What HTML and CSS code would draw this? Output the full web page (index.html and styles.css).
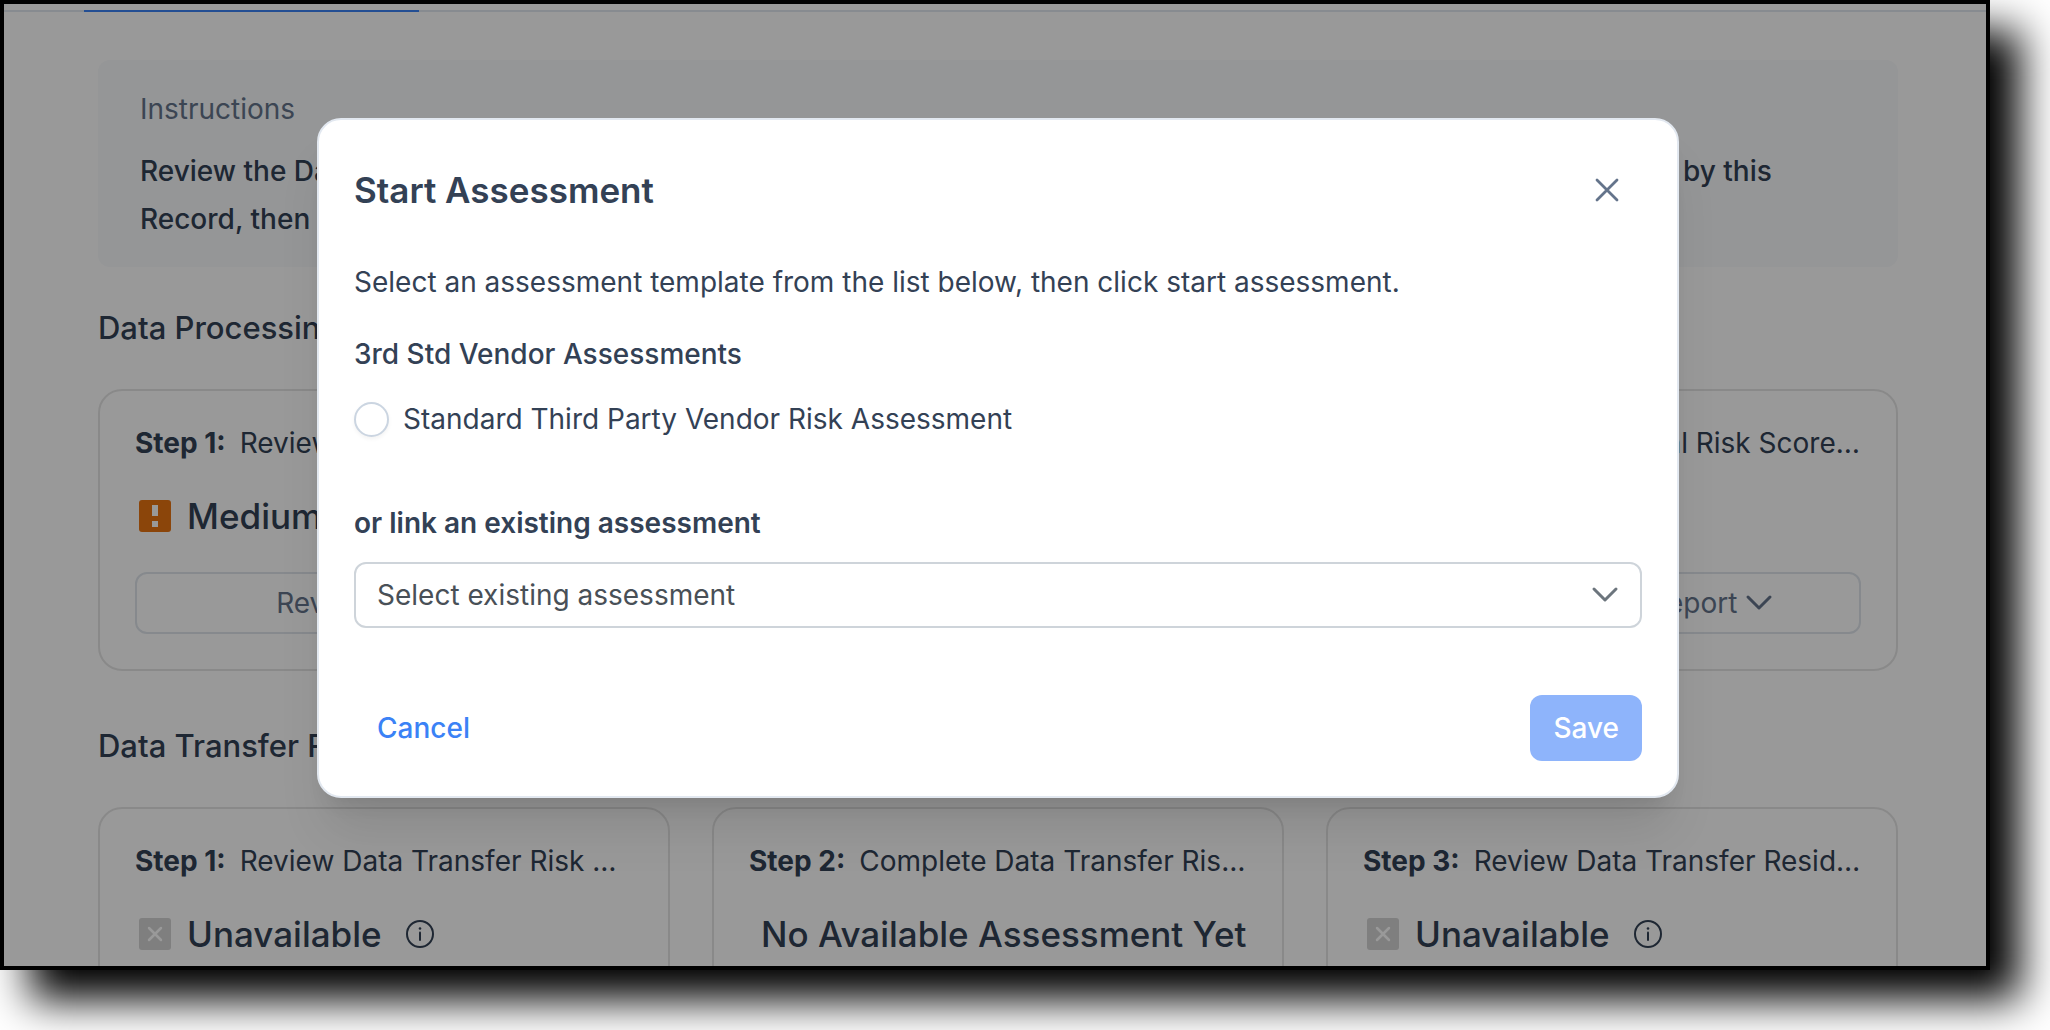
FILE: index.html
```html
<!DOCTYPE html>
<html lang="en">
<head>
  <meta charset="utf-8">
  <meta name="viewport" content="width=device-width, initial-scale=1">
  <title>Start Assessment</title>
  <link rel="stylesheet" href="styles.css">
</head>
<body>
  <svg class="sprite" aria-hidden="true">
    <symbol id="icon-warning" viewBox="0 0 32 32">
      <rect width="32" height="32" rx="3" fill="#e87312"/>
      <path d="M13 5h6v11h-6zM13 21h6v6h-6z" fill="#fff"/>
    </symbol>
    <symbol id="icon-unavailable" viewBox="0 0 32 32">
      <rect width="32" height="32" rx="3" fill="#d4d4d4"/>
      <path d="M10 10l12 12M22 10l-12 12" fill="none" stroke="#fff" stroke-width="2.500" stroke-linecap="round"/>
    </symbol>
    <symbol id="icon-info" viewBox="0 0 28 28">
      <circle cx="14" cy="14" r="13" fill="none" stroke="currentColor" stroke-width="2"/>
      <path d="M14 12.500v7.500" fill="none" stroke="currentColor" stroke-width="2" stroke-linecap="round"/>
      <circle cx="14" cy="8.500" r="1.300" fill="currentColor"/>
    </symbol>
    <symbol id="icon-chevron" viewBox="0 0 28 28">
      <path d="M3 8l11 11 11-11" fill="none" stroke="currentColor" stroke-width="3" stroke-linecap="round" stroke-linejoin="round"/>
    </symbol>
    <symbol id="icon-close" viewBox="0 0 28 28">
      <path d="M4 4l20 20M24 4L4 24" fill="none" stroke="currentColor" stroke-width="2.800" stroke-linecap="round"/>
    </symbol>
  </svg>

  <div class="window">
    <div class="page">
      <nav class="tabs"><a class="tab" href="#risk" aria-label="Risk"></a></nav>
      <main class="content">
        <section class="instructions">
          <p class="instructions-label">Instructions</p>
          <p class="instructions-text">Review the Data Processing Risk and the Data Transfer Risk for the Systems, Vendors, and Company Entities linked by this Record, then complete each of the steps below.</p>
        </section>

        <section class="group">
          <h2 class="group-title">Data Processing Risk</h2>
          <div class="cards">
            <article class="card">
              <h3 class="step"><b class="step-number">Step 1:</b><span class="step-name">Review Data Processing Risk Score</span></h3>
              <div class="status">
                <svg class="status-icon"><use href="#icon-warning"/></svg>
                <span>Medium</span>
              </div>
              <button class="card-button" type="button">Review Score <svg class="chevron"><use href="#icon-chevron"/></svg></button>
            </article>
            <article class="card">
              <h3 class="step"><b class="step-number">Step 2:</b><span class="step-name">Complete Risk Assessment</span></h3>
              <div class="status status-plain">No Available Assessment Yet</div>
              <button class="card-button" type="button">Start Assessment</button>
            </article>
            <article class="card">
              <h3 class="step"><b class="step-number">Step 3:</b><span class="step-name">Review Residual Risk Score Report</span></h3>
              <div class="status">
                <svg class="status-icon"><use href="#icon-warning"/></svg>
                <span>Medium</span>
              </div>
              <button class="card-button" type="button">Open Residual Report <svg class="chevron"><use href="#icon-chevron"/></svg></button>
            </article>
          </div>
        </section>

        <section class="group">
          <h2 class="group-title">Data Transfer Risk</h2>
          <div class="cards">
            <article class="card">
              <h3 class="step"><b class="step-number">Step 1:</b><span class="step-name">Review Data Transfer Risk Score</span></h3>
              <div class="status">
                <svg class="status-icon"><use href="#icon-unavailable"/></svg>
                <span>Unavailable</span>
                <svg class="info-icon"><use href="#icon-info"/></svg>
              </div>
            </article>
            <article class="card">
              <h3 class="step"><b class="step-number">Step 2:</b><span class="step-name">Complete Data Transfer Risk Assessment</span></h3>
              <div class="status status-plain">No Available Assessment Yet</div>
            </article>
            <article class="card">
              <h3 class="step"><b class="step-number">Step 3:</b><span class="step-name">Review Data Transfer Residual Risk</span></h3>
              <div class="status">
                <svg class="status-icon"><use href="#icon-unavailable"/></svg>
                <span>Unavailable</span>
                <svg class="info-icon"><use href="#icon-info"/></svg>
              </div>
            </article>
          </div>
        </section>
      </main>
    </div>

    <div class="overlay">
      <form class="modal" role="dialog" aria-labelledby="modal-title">
        <header class="modal-header">
          <h1 class="modal-title" id="modal-title">Start Assessment</h1>
          <button class="close" type="button" aria-label="Close"><svg class="close-icon"><use href="#icon-close"/></svg></button>
        </header>
        <p class="modal-text">Select an assessment template from the list below, then click start assessment.</p>
        <h2 class="modal-subtitle">3rd Std Vendor Assessments</h2>
        <label class="option"><input class="radio" type="radio" name="template">Standard Third Party Vendor Risk Assessment</label>
        <label class="field-label" for="existing">or link an existing assessment</label>
        <div class="select-wrap">
          <select class="select" id="existing"><option>Select existing assessment</option></select>
          <svg class="chevron select-chevron"><use href="#icon-chevron"/></svg>
        </div>
        <footer class="modal-footer">
          <button class="button button-text" type="button">Cancel</button>
          <button class="button button-primary" type="submit" disabled>Save</button>
        </footer>
      </form>
    </div>
  </div>
</body>
</html>
```
FILE: styles.css
```css
* {
  box-sizing: border-box;
}

body {
  margin: 0;
  padding: 0 60px 60px 0;
  height: 100vh;
  background: #fff;
  color: #334155;
  font: 400 28px/40px Inter, "Liberation Sans", sans-serif;
  overflow: hidden;
}

h1, h2, h3, p {
  margin: 0;
  font-size: inherit;
  font-weight: inherit;
}

button, select {
  font: inherit;
}

.sprite {
  position: absolute;
  width: 0;
  height: 0;
}

.window {
  position: relative;
  height: 100%;
  border: 4px solid #000;
  background: #fff;
  box-shadow: 30px 30px 40px #000;
}

.page {
  height: 100%;
  overflow: hidden;
}

.tabs {
  display: flex;
  padding: 6px 80px 0;
  border-bottom: 2px solid #e2e8f0;
}

.tab {
  width: 335px;
  height: 2px;
  margin-bottom: -2px;
  background: #3b82f6;
}

.content {
  padding: 48px 88px 0 94px;
}

.instructions {
  display: grid;
  gap: 14px;
  padding: 25px 42px 24px;
  border-radius: 12px;
  background: #f8fafc;
  line-height: 48px;
}

.instructions-label {
  color: #64748b;
}

.instructions-text {
  font-weight: 500;
}

.group {
  margin-top: 37px;
}

.group + .group {
  margin-top: 51px;
}

.group-title {
  margin-bottom: 37px;
  font-size: 31px;
  font-weight: 500;
  line-height: 48px;
}

.cards {
  display: grid;
  grid-template-columns: repeat(3, minmax(0, 1fr));
  gap: 42px;
}

.card {
  display: flex;
  flex-direction: column;
  padding: 32px 35px 35px;
  border: 2px solid #e5e5e5;
  border-radius: 24px;
}

.step {
  display: flex;
  gap: 14px;
  margin-bottom: 29px;
}

.step-number {
  flex: none;
  font-weight: 700;
}

.step-name {
  overflow: hidden;
  text-overflow: ellipsis;
  white-space: nowrap;
}

.status {
  display: flex;
  align-items: center;
  gap: 16px;
  margin-bottom: 32px;
  padding-left: 4px;
  font-size: 35px;
  font-weight: 500;
  line-height: 48px;
  white-space: nowrap;
}

.status-plain {
  padding-left: 12px;
}

.status-icon {
  width: 32px;
  height: 32px;
}

.info-icon {
  width: 28px;
  height: 28px;
  margin-left: 8px;
}

.card-button {
  display: flex;
  align-items: center;
  justify-content: center;
  gap: 8px;
  height: 62px;
  border: 2px solid #dfe5ec;
  border-radius: 12px;
  background: none;
  color: #64748b;
}

.chevron {
  width: 28px;
  height: 28px;
}

.overlay {
  position: absolute;
  inset: 0;
  padding: 114px 307px 0 313px;
  background: rgba(0, 0, 0, 0.4);
}

.modal {
  padding: 46px 35px 35px;
  border: 2px solid #e2e8f0;
  border-radius: 24px;
  background: #fff;
  box-shadow: 0 40px 50px -10px rgba(0, 0, 0, 0.1), 0 16px 20px -12px rgba(0, 0, 0, 0.1);
}

.modal-header {
  display: flex;
  align-items: center;
  justify-content: space-between;
  margin-bottom: 48px;
}

.modal-title {
  font-size: 35px;
  font-weight: 600;
  line-height: 48px;
}

.close {
  display: flex;
  padding: 0;
  margin-right: 21px;
  border: 0;
  background: none;
  color: #64748b;
}

.close-icon {
  width: 28px;
  height: 28px;
}

.modal-text {
  margin-bottom: 32px;
}

.modal-subtitle {
  margin-bottom: 25px;
  font-weight: 500;
}

.option {
  display: flex;
  align-items: center;
  gap: 14px;
  margin-bottom: 64px;
}

.radio {
  appearance: none;
  width: 35px;
  height: 35px;
  margin: 0;
  border: 2px solid #cbd5e1;
  border-radius: 50%;
  background: #fff;
  box-shadow: 0 2px 4px rgba(0, 0, 0, 0.05);
}

.field-label {
  display: block;
  margin-bottom: 19px;
  font-weight: 600;
}

.select-wrap {
  position: relative;
  margin-bottom: 67px;
}

.select {
  display: block;
  appearance: none;
  width: 100%;
  height: 66px;
  padding: 0 64px 0 21px;
  border: 2px solid #ced4da;
  border-radius: 12px;
  background: #fff;
  color: #495057;
}

.select-chevron {
  position: absolute;
  top: 19px;
  right: 23px;
  color: #6c757d;
  pointer-events: none;
}

.modal-footer {
  display: flex;
  justify-content: space-between;
}

.button {
  height: 66px;
  padding: 0 23px;
  border: 0;
  border-radius: 12px;
  font-weight: 500;
}

.button-text {
  background: none;
  color: #3b82f6;
}

.button-primary {
  background: #8eb4fb;
  color: #fff;
}
```
